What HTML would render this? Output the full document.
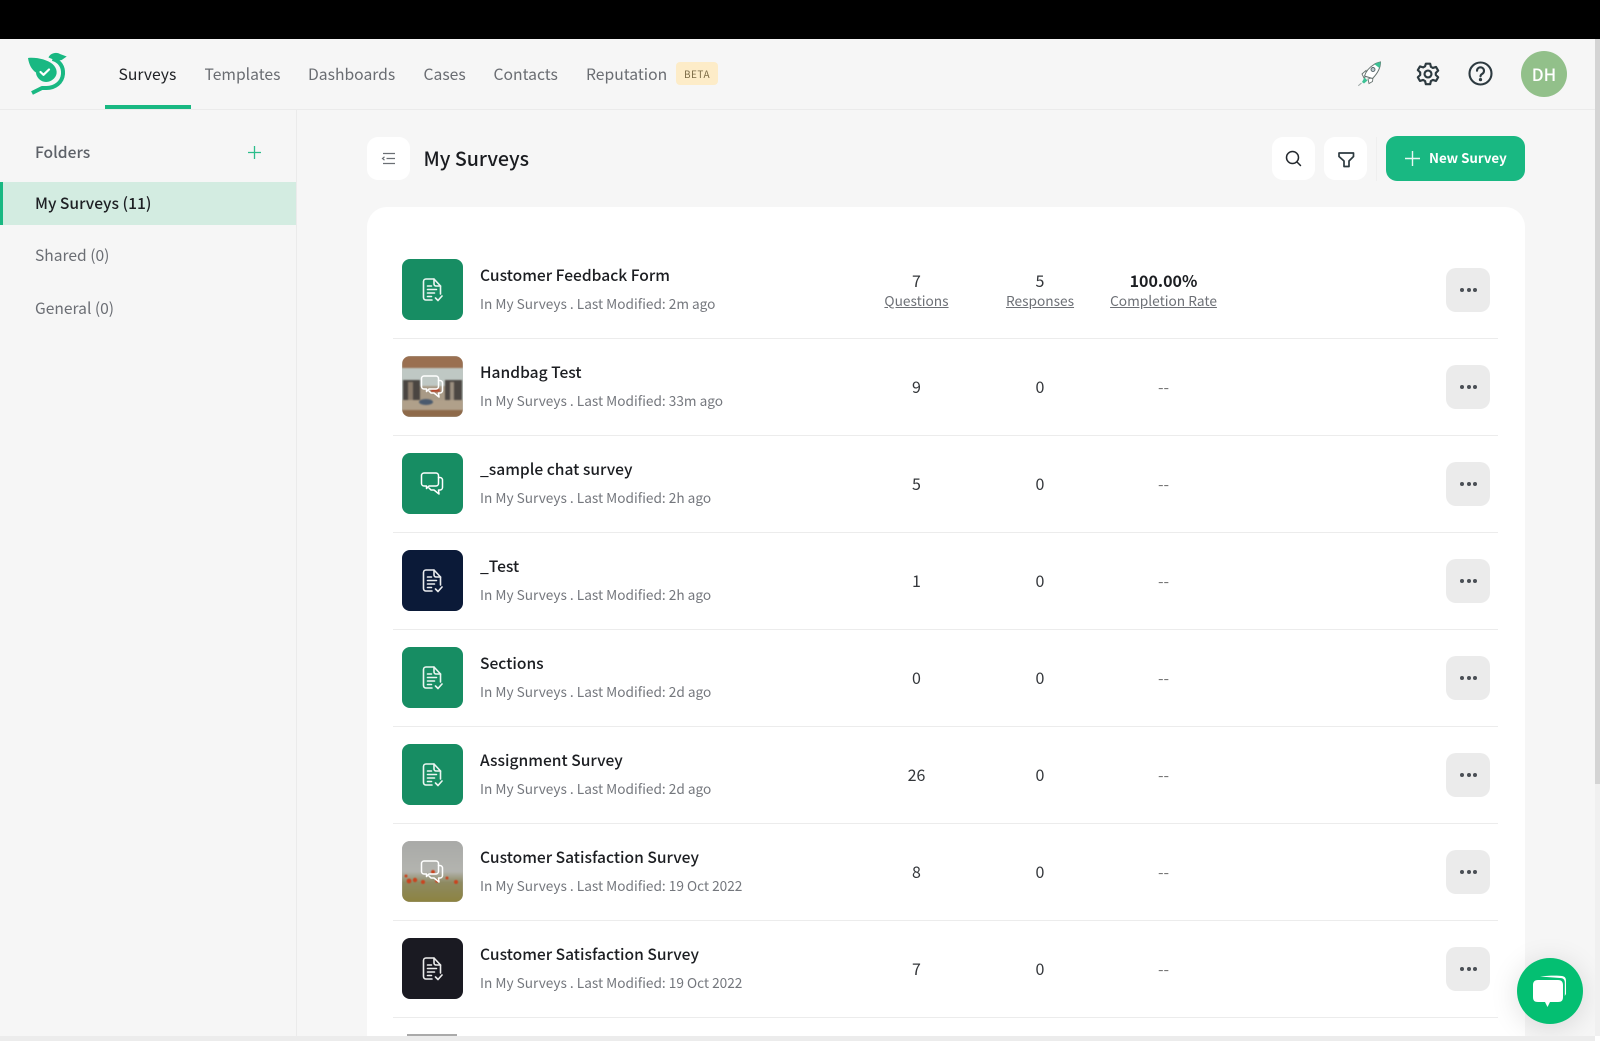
<!DOCTYPE html>
<html><head><meta charset="utf-8"><title>My Surveys</title>
<style>
*{box-sizing:border-box}
html,body{margin:0;padding:0;width:1600px;height:1041px;overflow:hidden;background:#f6f6f6;font-family:"Noto Sans CJK JP","Liberation Sans",sans-serif;color:#1d1f23}
#w{position:absolute;left:0;top:0;width:1600px;height:1041px;overflow:hidden;background:#f6f6f6}
.a{position:absolute}
.t{position:absolute;white-space:nowrap;line-height:20px}
.nav{font-size:15.7px;color:#6a6d72;top:63.5px}
.fold{font-size:15.6px;left:35px;color:#6b6e74}
.btn{position:absolute;background:#fff;border-radius:11px;width:43px;height:43px;top:137px}
.r{position:absolute;left:393px;width:1105px;height:97px;border-bottom:1px solid #ececec}
.ic{position:absolute;left:8.5px;top:17px;width:61px;height:61px;border-radius:8px;overflow:hidden}
.ic svg{position:absolute;left:0;top:0}
.n{position:absolute;left:87px;top:22.5px;font-size:15.6px;font-weight:500;color:#1c1e22;line-height:20px;white-space:nowrap}
.s{position:absolute;left:87px;top:50.5px;font-size:13.65px;color:#74777d;line-height:20px;white-space:nowrap}
.v{position:absolute;width:120px;text-align:center;font-size:16px;color:#33363a;line-height:20px;top:37px}
.v1{left:463.5px}.v2{left:587px}.v3{left:710.5px;color:#777}
.m{position:absolute;left:1053px;top:26px;width:44px;height:44px;border-radius:10px;background:#ebebeb}
.m i{position:absolute;top:20px;width:4px;height:4px;border-radius:50%;background:#4a4f55}
.m i:nth-child(1){left:14px}.m i:nth-child(2){left:20.5px}.m i:nth-child(3){left:27px}
.l{position:absolute;width:160px;text-align:center;font-size:13.7px;color:#6d7076;text-decoration:underline;line-height:18px;top:49px}
</style></head>
<body>
<div id="w">
<svg width="0" height="0" style="position:absolute">
<defs>
<symbol id="doc" viewBox="0 0 61 61">
<g fill="none" stroke="#fff" stroke-width="1.6" stroke-linecap="round" stroke-linejoin="round" opacity=".92">
<path d="M30 41H24a2.500 2.500 0 0 1-2.500-2.500V22.500A2.500 2.500 0 0 1 24 20h8l6.500 7v8"/>
<path d="M32 20v5a2 2 0 0 0 2 2h4.500"/>
<path d="M25.500 27h4M25.500 30.500h9M25.500 34h7M25.500 37.500h4"/>
<path d="M33.500 39l2.500 2.500 4-4.500"/>
</g>
</symbol>
<symbol id="chat" viewBox="0 0 61 61">
<g fill="none" stroke="#fff" stroke-width="1.5" stroke-linejoin="round" stroke-linecap="round">
<path d="M22 20h12a2.500 2.500 0 0 1 2.500 2.500v8a2.500 2.500 0 0 1-2.500 2.500h-7l-2.500 2.500V33H22a2.500 2.500 0 0 1-2.500-2.500v-8A2.500 2.500 0 0 1 22 20z"/>
<path d="M36.500 24.500H38a2.500 2.500 0 0 1 2.500 2.500v7.500a2.500 2.500 0 0 1-2.500 2.500h-1.500l.5 4-5-4h-3l-2-2"/>
</g>
</symbol>
</defs>
</svg>

<div class="a" style="left:0;top:0;width:1600px;height:39px;background:#000"></div>

<!-- header -->
<div class="a" style="left:0;top:108.500px;width:1595px;height:1px;background:#ebebeb"></div>
<svg class="a" style="left:26px;top:50px" width="44" height="46" viewBox="26 50 44 46">
<path d="M52.500 59C60 61 63.500 67 63 74c-.7 8.500-8 14-16.500 14H42L32 93" fill="none" stroke="#19b882" stroke-width="4" stroke-linejoin="round"/>
<path d="M48.500 57.500C50 53.500 56 51.500 60 54l6.700 2.500-5 3.500-4.700 1z" fill="#19b882"/>
<path d="M28 58C36 57 47 59.500 52.500 64c5 4.500 5.500 10.500 1.500 14.500-4.500 4.500-11 4.500-15 .5-2-2-3-4.500-3-6.500C32 70 29 65 28 58z" fill="#19b882"/>
<path d="M40.500 72l3 2.800 5.500-5.300" fill="none" stroke="#fff" stroke-width="2.200" stroke-linecap="round" stroke-linejoin="round"/>
</svg>
<div class="t nav" style="left:118.500px;color:#202226">Surveys</div>
<div class="a" style="left:104.500px;top:105px;width:86px;height:3.500px;background:#19b882"></div>
<div class="t nav" style="left:204.500px">Templates</div>
<div class="t nav" style="left:308px">Dashboards</div>
<div class="t nav" style="left:423.500px">Cases</div>
<div class="t nav" style="left:493.500px">Contacts</div>
<div class="t nav" style="left:586px">Reputation</div>
<div class="a" style="left:676px;top:62px;width:42px;height:23px;border-radius:4px;background:#fdecc8;color:#7a6a45;font-size:10px;line-height:23px;text-align:center;letter-spacing:.5px">BETA</div>

<svg class="a" style="left:1356.500px;top:60px" width="26" height="28" viewBox="0 0 26 28">
<path d="M5 14l4-3.500 1 5-3 2.500zM11 19l5-1.500-.5 4-3.500 2z" fill="#fff" stroke="#66726f" stroke-width=".9"/>
<path d="M23.500 2C23.500 8 20 14 15.500 18.500L7.500 16C9 11 13 7 17 4.500 19 3 21 2.500 23.500 2z" fill="#fff" stroke="#66726f" stroke-width="1"/>
<path d="M23.500 2c0 2-.4 4-1.200 6L17.500 4.300C19 3 21 2.500 23.500 2z" fill="#3cc194"/>
<circle cx="16" cy="9.500" r="2" fill="#b9c8cc" stroke="#55656a" stroke-width=".9"/>
<path d="M7.500 17.500l3 3-3.500 3-2-1.500z" fill="#3cc194"/>
<path d="M4.500 23l-3.200 2.800" stroke="#9aa5a3" stroke-width="1"/>
</svg>
<svg class="a" style="left:1415px;top:60.500px" width="26" height="26" viewBox="0 0 24 24" fill="none" stroke="#2d3a40" stroke-width="2" stroke-linejoin="round">
<circle cx="12" cy="12" r="3.200"/>
<path d="M10 2.500h4l.7 2.900 1.800 1 2.900-.9 2 3.400-2.200 2.100v1.900l2.200 2.100-2 3.400-2.900-.9-1.800 1-.7 2.900h-4l-.7-2.900-1.800-1-2.900.9-2-3.400 2.200-2.100V10.500L2.600 8.400l2-3.400 2.900.9 1.800-1z"/>
</svg>
<svg class="a" style="left:1468px;top:61px" width="25" height="25" viewBox="0 0 25 25" fill="none" stroke="#2d3a40" stroke-width="2.100" stroke-linecap="round">
<circle cx="12.500" cy="12.500" r="11"/>
<path d="M9 9.800a3.500 3.500 0 1 1 5.300 3c-1.200.7-1.800 1.300-1.800 2.600"/>
<circle cx="12.500" cy="18.600" r=".6" fill="#2d3a40"/>
</svg>
<div class="a" style="left:1521px;top:51px;width:46px;height:46px;border-radius:50%;background:#92c08a;color:#fff;font-size:17px;font-weight:500;line-height:46px;text-align:center">DH</div>

<!-- sidebar -->
<div class="a" style="left:296px;top:109px;width:1px;height:927px;background:#ebebeb"></div>
<div class="t fold" style="top:142px;font-weight:500;color:#5d6168">Folders</div>
<svg class="a" style="left:247px;top:145px" width="15" height="15" viewBox="0 0 15 15"><path d="M7.500 1v13M1 7.500h13" stroke="#2cbd8c" stroke-width="1.300"/></svg>
<div class="a" style="left:0;top:181.500px;width:296px;height:43.500px;background:#d3ece1"></div>
<div class="a" style="left:0;top:181.500px;width:3px;height:43.500px;background:#19b882"></div>
<div class="t fold" style="top:192.500px;color:#1e2024;font-weight:500">My Surveys (11)</div>
<div class="t fold" style="top:245px">Shared (0)</div>
<div class="t fold" style="top:297.500px">General (0)</div>

<!-- toolbar -->
<div class="btn" style="left:367px">
<svg class="a" style="left:14px;top:14px" width="15" height="15" viewBox="0 0 15 15" fill="none" stroke="#6b6f74" stroke-width="1.200"><path d="M2 2.500h12M5.500 7.500H14M2 12.500h12M3.500 5.800L1.500 7.500l2 1.700"/></svg>
</div>
<div class="t" style="left:423.500px;top:145px;font-size:19.6px;line-height:26px;font-weight:500;color:#1a1c20">My Surveys</div>
<div class="btn" style="left:1272px">
<svg class="a" style="left:13px;top:13px" width="17" height="17" viewBox="0 0 17 17" fill="none" stroke="#23282d" stroke-width="1.500" stroke-linecap="round"><circle cx="7.500" cy="7.500" r="6"/><path d="M12 12l3.500 3.500"/></svg>
</div>
<div class="btn" style="left:1324px">
<svg class="a" style="left:13.500px;top:14.500px" width="17" height="16" viewBox="0 0 17 16" fill="none" stroke="#2d3a40" stroke-width="1.700" stroke-linejoin="round"><path d="M1 1h14.500v3.500L11 9v5.500H6V9L1 4.500z"/></svg>
</div>
<div class="a" style="left:1376px;top:137px;width:1px;height:44px;background:#efefef"></div>
<div class="a" style="left:1386px;top:136px;width:139px;height:45px;border-radius:11px;background:#19b882"></div>
<svg class="a" style="left:1404px;top:150px" width="17" height="17" viewBox="0 0 17 17"><path d="M8.500 1v15M1 8.500h15" stroke="#fff" stroke-width="1.400" opacity=".9"/></svg>
<div class="t" style="left:1429px;top:148px;font-size:13.3px;font-weight:700;color:#fff">New Survey</div>

<!-- card -->
<div class="a" style="left:367px;top:206.500px;width:1158px;height:840px;background:#fff;border-radius:20px 20px 0 0"></div>

<div class="r" style="top:242px">
<div class="ic" style="background:#178d63"><svg width="61" height="61"><use href="#doc"/></svg></div>
<div class="n">Customer Feedback Form</div><div class="s">In My Surveys . Last Modified: 2m ago</div>
<div class="v v1" style="top:28px">7</div><div class="l" style="left:443.500px">Questions</div>
<div class="v v2" style="top:28px">5</div><div class="l" style="left:567px">Responses</div>
<div class="v v3" style="top:28px;color:#1c1e22;font-weight:700">100.00%</div><div class="l" style="left:690.500px">Completion Rate</div>
<div class="m"><i></i><i></i><i></i></div>
</div>

<div class="r" style="top:339px">
<div class="ic" style="background:#c4cbc6">
<svg width="61" height="61" viewBox="0 0 61 61" style="filter:blur(.8px)">
<rect width="61" height="12" fill="#9a6f50"/><rect y="12" width="61" height="20" fill="#bfc8c4"/>
<rect x="1" y="24" width="17" height="21" fill="#4a4541"/><rect x="43" y="24" width="17" height="21" fill="#4c4743"/>
<rect x="6" y="26" width="5" height="18" fill="#8b7c6c"/><rect x="48" y="26" width="4" height="18" fill="#9c8f80"/>
<rect x="18" y="30" width="25" height="16" fill="#a89a86"/>
<rect y="44" width="61" height="10" fill="#b0a08a"/><ellipse cx="24" cy="46" rx="7" ry="3" fill="#4a5a6e"/>
<rect y="54" width="61" height="7" fill="#8e6a4a"/>
<rect x="29" y="33" width="9" height="3" fill="#b5452a"/>
</svg>
<svg width="61" height="61"><use href="#chat"/></svg></div>
<div class="n">Handbag Test</div><div class="s">In My Surveys . Last Modified: 33m ago</div>
<div class="v v1">9</div><div class="v v2">0</div><div class="v v3">--</div>
<div class="m"><i></i><i></i><i></i></div>
</div>

<div class="r" style="top:436px">
<div class="ic" style="background:#178d63"><svg width="61" height="61"><use href="#chat"/></svg></div>
<div class="n">_sample chat survey</div><div class="s">In My Surveys . Last Modified: 2h ago</div>
<div class="v v1">5</div><div class="v v2">0</div><div class="v v3">--</div>
<div class="m"><i></i><i></i><i></i></div>
</div>

<div class="r" style="top:533px">
<div class="ic" style="background:#0b1a38"><svg width="61" height="61"><use href="#doc"/></svg></div>
<div class="n">_Test</div><div class="s">In My Surveys . Last Modified: 2h ago</div>
<div class="v v1">1</div><div class="v v2">0</div><div class="v v3">--</div>
<div class="m"><i></i><i></i><i></i></div>
</div>

<div class="r" style="top:630px">
<div class="ic" style="background:#178d63"><svg width="61" height="61"><use href="#doc"/></svg></div>
<div class="n">Sections</div><div class="s">In My Surveys . Last Modified: 2d ago</div>
<div class="v v1">0</div><div class="v v2">0</div><div class="v v3">--</div>
<div class="m"><i></i><i></i><i></i></div>
</div>

<div class="r" style="top:727px">
<div class="ic" style="background:#178d63"><svg width="61" height="61"><use href="#doc"/></svg></div>
<div class="n">Assignment Survey</div><div class="s">In My Surveys . Last Modified: 2d ago</div>
<div class="v v1">26</div><div class="v v2">0</div><div class="v v3">--</div>
<div class="m"><i></i><i></i><i></i></div>
</div>

<div class="r" style="top:824px">
<div class="ic" style="background:#b4b5b2">
<svg width="61" height="61" viewBox="0 0 61 61" style="filter:blur(.6px)">
<defs><linearGradient id="f" x1="0" y1="0" x2="0" y2="1"><stop offset="0" stop-color="#a9aaa8"/><stop offset=".5" stop-color="#b3b4af"/><stop offset=".68" stop-color="#8e8a62"/><stop offset="1" stop-color="#8d8340"/></linearGradient></defs>
<rect width="61" height="61" fill="url(#f)"/>
<g fill="#c9441f"><circle cx="7" cy="40" r="2.400"/><circle cx="13" cy="39" r="2.200"/><circle cx="21" cy="41" r="2"/><circle cx="31" cy="31" r="2"/><circle cx="35" cy="40" r="1.800"/><circle cx="54" cy="41" r="2"/><circle cx="4" cy="35" r="1.500"/><circle cx="45" cy="37" r="1.500"/></g>
</svg>
<svg width="61" height="61"><use href="#chat"/></svg></div>
<div class="n">Customer Satisfaction Survey</div><div class="s">In My Surveys . Last Modified: 19 Oct 2022</div>
<div class="v v1">8</div><div class="v v2">0</div><div class="v v3">--</div>
<div class="m"><i></i><i></i><i></i></div>
</div>

<div class="r" style="top:921px">
<div class="ic" style="background:#1a1a22"><svg width="61" height="61"><use href="#doc"/></svg></div>
<div class="n">Customer Satisfaction Survey</div><div class="s">In My Surveys . Last Modified: 19 Oct 2022</div>
<div class="v v1">7</div><div class="v v2">0</div><div class="v v3">--</div>
<div class="m"><i></i><i></i><i></i></div>
</div>

<div class="a" style="left:407px;top:1034px;width:50px;height:2px;background:#aaa"></div>

<!-- chat widget -->
<div class="a" style="left:1517px;top:958px;width:66px;height:66px;border-radius:50%;background:#04bf72;box-shadow:0 4px 28px rgba(0,0,0,.13)"></div>
<svg class="a" style="left:1530px;top:972px" width="40" height="40" viewBox="0 0 40 40">
<path d="M10 4.500C18 3.500 28 3.500 32 4c3 .5 4 2 4 5v13l-1.200 2V10.500C34.800 7.500 33 6 30 6z" fill="#fff"/>
<path d="M8 8h20c3.500 0 5 2 5 5v12c0 3.500-1.500 5-5 5h-8l-2.500 5-2.500-5H8c-3.500 0-5-1.500-5-5V13c0-3 1.500-5 5-5z" fill="#fff"/>
</svg>

<!-- scrollbars -->
<div class="a" style="left:1595px;top:39px;width:5px;height:1002px;background:#f0f0f0"></div>
<div class="a" style="left:1595px;top:39px;width:5px;height:745px;background:#d4d4d4"></div>
<div class="a" style="left:0;top:1035.500px;width:1595px;height:5.500px;background:#ececec"></div>
<div class="a" style="left:1595px;top:1036px;width:5px;height:5px;background:#fff"></div>
</div>
</body></html>
